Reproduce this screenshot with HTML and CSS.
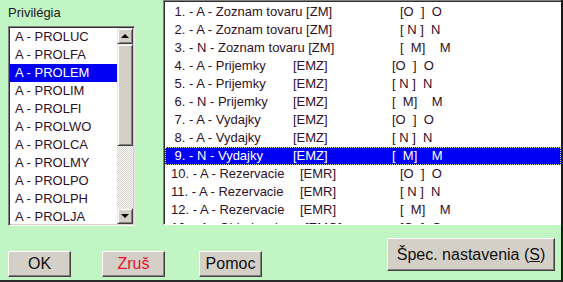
FILE: index.html
```html
<!DOCTYPE html>
<html lang="sk">
<head>
    <meta charset="UTF-8">
    <title>Privilégia</title>
    <link rel="stylesheet" href="styles.css">
</head>
<body>
    <div class="window">
        <div class="top">
            <!-- Zoznam privilégií -->
            <div class="left">
                <div class="label">Privilégia</div>
                <div class="listbox">
                    <ul class="items">
                        <li>A - PROLUC</li>
                        <li>A - PROLFA</li>
                        <li class="sel">A - PROLEM</li>
                        <li>A - PROLIM</li>
                        <li>A - PROLFI</li>
                        <li>A - PROLWO</li>
                        <li>A - PROLCA</li>
                        <li>A - PROLMY</li>
                        <li>A - PROLPO</li>
                        <li>A - PROLPH</li>
                        <li>A - PROLJA</li>
                    </ul>
                    <div class="scrollbar">
                        <div class="sb-btn"><span class="arrow up"></span></div>
                        <div class="sb-thumb"></div>
                        <div class="sb-track"></div>
                        <div class="sb-btn"><span class="arrow down"></span></div>
                    </div>
                </div>
            </div>

            <!-- Zoznam práv -->
            <div class="rights">
                <div class="row g1"><span class="t"> 1. - A - Zoznam tovaru [ZM]</span><span class="f">[O  ]  O</span></div>
                <div class="row g1"><span class="t"> 2. - A - Zoznam tovaru [ZM]</span><span class="f">[ N ]  N</span></div>
                <div class="row g1"><span class="t"> 3. - N - Zoznam tovaru [ZM]</span><span class="f">[  M]    M</span></div>
                <div class="row g2"><span class="t"> 4. - A - Prijemky</span><span class="c">[EMZ]</span><span class="f">[O  ]  O</span></div>
                <div class="row g2"><span class="t"> 5. - A - Prijemky</span><span class="c">[EMZ]</span><span class="f">[ N ]  N</span></div>
                <div class="row g2"><span class="t"> 6. - N - Prijemky</span><span class="c">[EMZ]</span><span class="f">[  M]    M</span></div>
                <div class="row g2"><span class="t"> 7. - A - Vydajky</span><span class="c">[EMZ]</span><span class="f">[O  ]  O</span></div>
                <div class="row g2"><span class="t"> 8. - A - Vydajky</span><span class="c">[EMZ]</span><span class="f">[ N ]  N</span></div>
                <div class="row g2 sel"><span class="t"> 9. - N - Vydajky</span><span class="c">[EMZ]</span><span class="f">[  M]    M</span></div>
                <div class="row g3"><span class="t">10. - A - Rezervacie</span><span class="c">[EMR]</span><span class="f">[O  ]  O</span></div>
                <div class="row g3"><span class="t">11. - A - Rezervacie</span><span class="c">[EMR]</span><span class="f">[ N ]  N</span></div>
                <div class="row g3"><span class="t">12. - A - Rezervacie</span><span class="c">[EMR]</span><span class="f">[  M]    M</span></div>
                <div class="row g4"><span class="t">13. - A - Objednavky</span><span class="c">[EMO]</span><span class="f">[O  ]  O</span></div>
            </div>
        </div>

        <!-- Tlačidlá -->
        <div class="actions">
            <button class="btn ok">OK</button>
            <button class="btn cancel">Zruš</button>
            <button class="btn help">Pomoc</button>
            <button class="btn spec">Špec. nastavenia (<u>S</u>)</button>
        </div>
    </div>
</body>
</html>
```

FILE: styles.css
```css
body {
    margin: 0;
    font-family: "Liberation Sans", Arial, sans-serif;
}

.window {
    width: 563px;
    height: 282px;
    box-sizing: border-box;
    background-color: #c2f5c4;
    border-right: 2px solid #1a1a1a;
    border-bottom: 2px solid #2a2a2a;
    display: flex;
    flex-direction: column;
    overflow: hidden;
}

.top {
    display: flex;
    height: 225px;
}

.left {
    width: 163px;
    padding-left: 8px;
    box-sizing: border-box;
}

.label {
    margin-top: 5px;
    font-size: 13px;
    line-height: 15px;
    color: #202020;
}

.listbox {
    margin-top: 6px;
    width: 127px;
    height: 200px;
    box-sizing: border-box;
    background-color: white;
    border-top: 1px solid #808080;
    border-left: 1px solid #808080;
    border-right: 1px solid #e8e8e8;
    border-bottom: 1px solid #ffffff;
    box-shadow: inset 1px 1px 0 #303030, inset -1px -1px 0 #d4d0c8;
    padding: 1px;
    display: flex;
    overflow: hidden;
}

.items {
    list-style: none;
    margin: 0;
    padding: 0;
    flex: 1;
    overflow: hidden;
}

.items li {
    height: 18px;
    line-height: 18px;
    font-size: 13px;
    padding-left: 5px;
    color: #301028;
    white-space: nowrap;
}

.items li.sel {
    background-color: #0000f4;
    color: white;
}

.scrollbar {
    width: 16px;
    display: flex;
    flex-direction: column;
}

.sb-btn,
.sb-thumb {
    box-sizing: border-box;
    background-color: #d4d0c8;
    border-top: 1px solid #e8e6e0;
    border-left: 1px solid #e8e6e0;
    border-right: 1px solid #404040;
    border-bottom: 1px solid #404040;
    box-shadow: inset 1px 1px 0 #ffffff, inset -1px -1px 0 #808080;
}

.sb-btn {
    height: 16px;
    display: flex;
    justify-content: center;
    align-items: center;
}

.sb-thumb {
    height: 102px;
}

.sb-track {
    flex: 1;
    background-color: #ffffff;
    background-image: repeating-conic-gradient(#d4d0c8 0 25%, #ffffff 0 50%);
    background-size: 2px 2px;
}

.arrow {
    width: 0;
    height: 0;
    border-left: 4px solid transparent;
    border-right: 4px solid transparent;
}

.arrow.up {
    border-bottom: 4px solid #000;
}

.arrow.down {
    border-top: 4px solid #000;
}

.rights {
    flex: 1;
    height: 225px;
    box-sizing: border-box;
    background-color: white;
    border-top: 1px solid #808080;
    border-left: 1px solid #808080;
    border-bottom: 1px solid #ffffff;
    box-shadow: inset 1px 1px 0 #303030;
    padding: 2px 0 0 1px;
    overflow: hidden;
}

.row {
    height: 18px;
    line-height: 18px;
    font-size: 13px;
    color: #301028;
    padding-left: 6px;
    white-space: pre;
    display: flex;
    box-sizing: border-box;
}

.row span {
    display: inline-block;
    white-space: pre;
}

.g1 .t { width: 229px; }
.g2 .t { width: 122px; }
.g2 .c { width: 99px; }
.g3 .t { width: 129px; }
.g3 .c { width: 100px; }
.g4 .t { width: 134px; }
.g4 .c { width: 95px; }

.row.sel {
    background-color: #0000f4;
    color: white;
    border: 1px dotted #d8d890;
    padding-left: 5px;
    line-height: 16px;
}

.actions {
    flex: 1;
    display: flex;
    align-items: flex-start;
    padding-left: 8px;
}

.btn {
    font-family: "Liberation Sans", Arial, sans-serif;
    font-size: 16px;
    color: #101010;
    background-color: #d4d0c8;
    border-top: 1px solid #ffffff;
    border-left: 1px solid #ffffff;
    border-right: 1px solid #404040;
    border-bottom: 1px solid #404040;
    box-shadow: inset -1px -1px 0 #808080;
    padding: 0;
    box-sizing: border-box;
    width: 63px;
    height: 26px;
    margin-top: 26px;
    cursor: pointer;
}

.cancel {
    margin-left: 31px;
    color: #e8102c;
}

.help {
    margin-left: 34px;
}

.spec {
    width: 168px;
    height: 33px;
    margin-top: 13px;
    margin-left: auto;
    margin-right: 6px;
}
```
